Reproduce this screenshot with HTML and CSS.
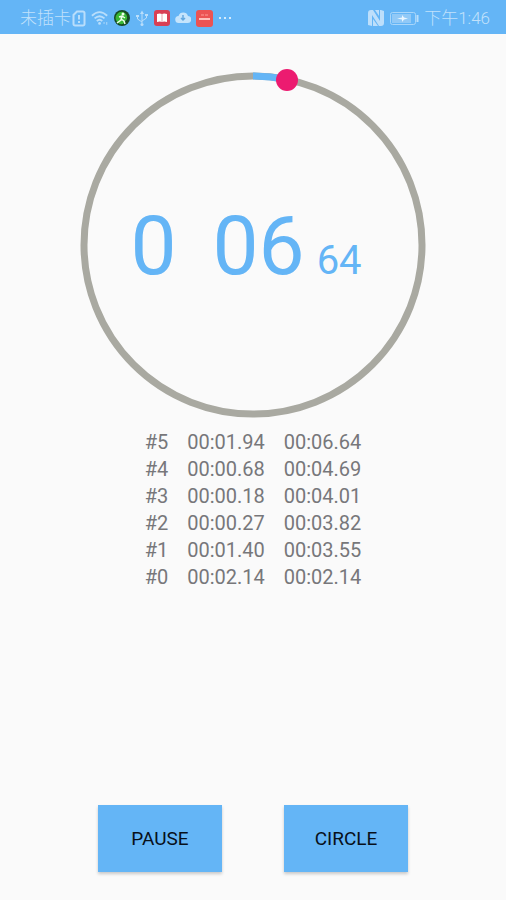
FILE: index.html
```html
<!DOCTYPE html>
<html lang="zh-CN">
<head>
<meta charset="utf-8">
<meta name="viewport" content="width=device-width, initial-scale=1">
<title>Stopwatch</title>
<link rel="stylesheet" href="styles.css">
</head>
<body>
<header class="status">
  <div class="status-group status-left">
    <span class="carrier">未插卡</span>
    <svg class="sim" width="14" height="17" viewBox="0 0 14 17" aria-hidden="true"><path d="M5 1.500h6a1.500 1.500 0 0 1 1.500 1.500v11a1.500 1.500 0 0 1-1.500 1.500H3A1.500 1.500 0 0 1 1.500 14V5zM7 5v4.500M7 11v2"/></svg>
    <svg class="wifi" width="18" height="16" viewBox="0 0 20 17" aria-hidden="true"><path d="M1 6q8.500-8 17 0M4 9q5.500-5 11 0M6.500 12q3-3 6 0"/><circle cx="9.500" cy="14.500" r="1.500"/><path class="traffic" d="M14.500 13v2M17.500 13v3"/></svg>
    <svg width="16" height="16" viewBox="0 0 16 16" aria-hidden="true"><circle cx="8" cy="8" r="8" fill="#174b24"/><path d="M2 10a6 6 0 0 1 7-8q5 2 4 7l-4 5q-5 1-7-4z" fill="#39b735"/><circle cx="9" cy="4" r="1.500" fill="#efffeb"/><path d="M8 6l-1 4-4 3M7 9l3 2 1 3M5 7l3-1 3 2" fill="none" stroke="#efffeb" stroke-width="1.500"/></svg>
    <svg class="usb" width="14" height="17" viewBox="0 0 14 17" aria-hidden="true"><path d="M7 2v11M7 12L2.500 9V6M7 11L11.500 8V5"/><path class="solid" d="M5 4l2-3.500L9 4zM1 5h3v2H1zM10 4h3v2h-3z"/><circle cx="7" cy="14.500" r="1.500"/></svg>
    <svg width="16" height="16" viewBox="0 0 16 16" aria-hidden="true"><rect width="16" height="16" rx="3" fill="#d83f55"/><path d="M3 4q3-1 5 0 2-1 5 0v8q-3-1-5 0-2-1-5 0z" fill="#fff"/><path d="M8 4v8" stroke="#e8a4b0"/></svg>
    <svg width="16" height="14" viewBox="0 0 16 14" aria-hidden="true"><path d="M4 12a3.500 3.500 0 0 1-.5-7A5 5 0 0 1 13 5a3.500 3.500 0 0 1-.5 7z" fill="#c5e4fc"/><path d="M8 4v5M6 7l2 2 2-2" fill="none" stroke="#64a8df" stroke-width="1.500"/></svg>
    <svg width="17" height="17" viewBox="0 0 17 17" aria-hidden="true"><rect width="17" height="17" rx="3" fill="#ec5353"/><path d="M5 5h3M9 5h3" stroke="#ff9d98" stroke-width="1"/><path d="M3 9h11" stroke="#ffc0bb" stroke-width="2"/></svg>
    <svg width="14" height="4" viewBox="0 0 14 4" aria-hidden="true"><path d="M1 2h2M6 2h2M11 2h2" stroke="#d3ebfd" stroke-width="2"/></svg>
  </div>
  <div class="status-group status-right">
    <svg width="16" height="16" viewBox="0 0 16 16" aria-hidden="true"><path d="M3 0h2l7 11V0h1l3 1v12q0 3-3 3h-2L4 5v11l-4-1V3q0-3 3-3zM7 0h4v6zM5 9l5 7H5z" fill="#bddffb"/></svg>
    <svg width="30" height="15" viewBox="0 0 30 15" aria-hidden="true"><rect x="1.500" y="1.500" width="25" height="12" rx="2" fill="none" stroke="#a9d6fa"/><rect x="3" y="3" width="19" height="9" fill="#91c9f7"/><path d="M28.500 4v7" stroke="#b9defc" stroke-width="2"/><path d="M8 7.500l5-1V4l2 2.500 4 1-4 1-2 2.500V8.500z" fill="#eaf6ff"/></svg>
    <span class="time">下午1:46</span>
  </div>
</header>
<main class="stopwatch">
  <section class="dial">
    <svg class="ring" viewBox="0 0 346 346" aria-hidden="true">
      <circle class="track" cx="173" cy="173" r="169"/>
      <path class="progress" d="M173 4A169 169 0 0 1 207 7.500"/>
      <circle class="knob" cx="207" cy="8" r="11"/>
    </svg>
    <div class="readout">
      <span class="minutes">0</span>
      <span class="seconds">06</span>
      <span class="hundredths">64</span>
    </div>
  </section>
  <table class="laps">
    <tbody>
      <tr><td>#5</td><td>00:01.94</td><td>00:06.64</td></tr>
      <tr><td>#4</td><td>00:00.68</td><td>00:04.69</td></tr>
      <tr><td>#3</td><td>00:00.18</td><td>00:04.01</td></tr>
      <tr><td>#2</td><td>00:00.27</td><td>00:03.82</td></tr>
      <tr><td>#1</td><td>00:01.40</td><td>00:03.55</td></tr>
      <tr><td>#0</td><td>00:02.14</td><td>00:02.14</td></tr>
    </tbody>
  </table>
  <div class="actions">
    <button type="button">PAUSE</button>
    <button type="button">CIRCLE</button>
  </div>
</main>
</body>
</html>
```
FILE: styles.css
```css
* { box-sizing: border-box; }

body {
  margin: 0;
  min-height: 100vh;
  display: flex;
  flex-direction: column;
  background: #fafafa;
  font-family: Roboto, "Noto Sans CJK SC", sans-serif;
}

.status {
  height: 34px;
  padding: 2px 16px 0 20px;
  display: flex;
  align-items: center;
  justify-content: space-between;
  background: #64b5f6;
  color: #c1e1fb;
  font-size: 17px;
  font-weight: 300;
  line-height: 24px;
}

.status-group {
  display: flex;
  align-items: center;
  gap: 5px;
}

.status svg { flex: none; }
.carrier { margin-right: -4px; }

.sim, .wifi, .usb {
  fill: none;
  stroke: #b9defb;
  stroke-width: 2;
}

.wifi circle, .usb circle, .usb .solid { fill: #b9defb; stroke: none; }
.wifi .traffic, .usb { stroke-width: 1; }

.stopwatch {
  flex: 1;
  padding: 38px 0 28px;
  display: flex;
  flex-direction: column;
  align-items: center;
}

.dial {
  width: 100%;
  max-width: 346px;
  display: grid;
  place-items: center;
}

.ring, .readout { grid-area: 1 / 1; }

.ring {
  display: block;
  width: 100%;
  overflow: visible;
}

.track { fill: none; stroke: #a9a9a1; stroke-width: 7; }
.progress { fill: none; stroke: #64b5f6; stroke-width: 7; }
.knob { fill: #ec1b70; }

.readout {
  display: flex;
  align-items: baseline;
  padding: 16px 14px 0 0;
  color: #64b5f6;
  font-size: 82px;
  line-height: 96px;
}

.seconds { margin-left: 36px; }
.hundredths { margin-left: 12px; font-size: 40px; }

.laps {
  margin-top: 11px;
  border-collapse: collapse;
  color: #77777a;
  font-size: 20px;
  line-height: 27px;
}

.laps td { padding: 0 19px 0 0; }
.laps td:last-child { padding: 0; }

.actions {
  margin-top: auto;
  display: flex;
  gap: 62px;
}

.actions button {
  width: 124px;
  height: 67px;
  padding: 0;
  border: 0;
  background: #64b5f6;
  box-shadow: 0 2px 3px rgba(0, 0, 0, 0.2);
  color: #08101a;
  font: 400 19px Roboto, sans-serif;
}
```
